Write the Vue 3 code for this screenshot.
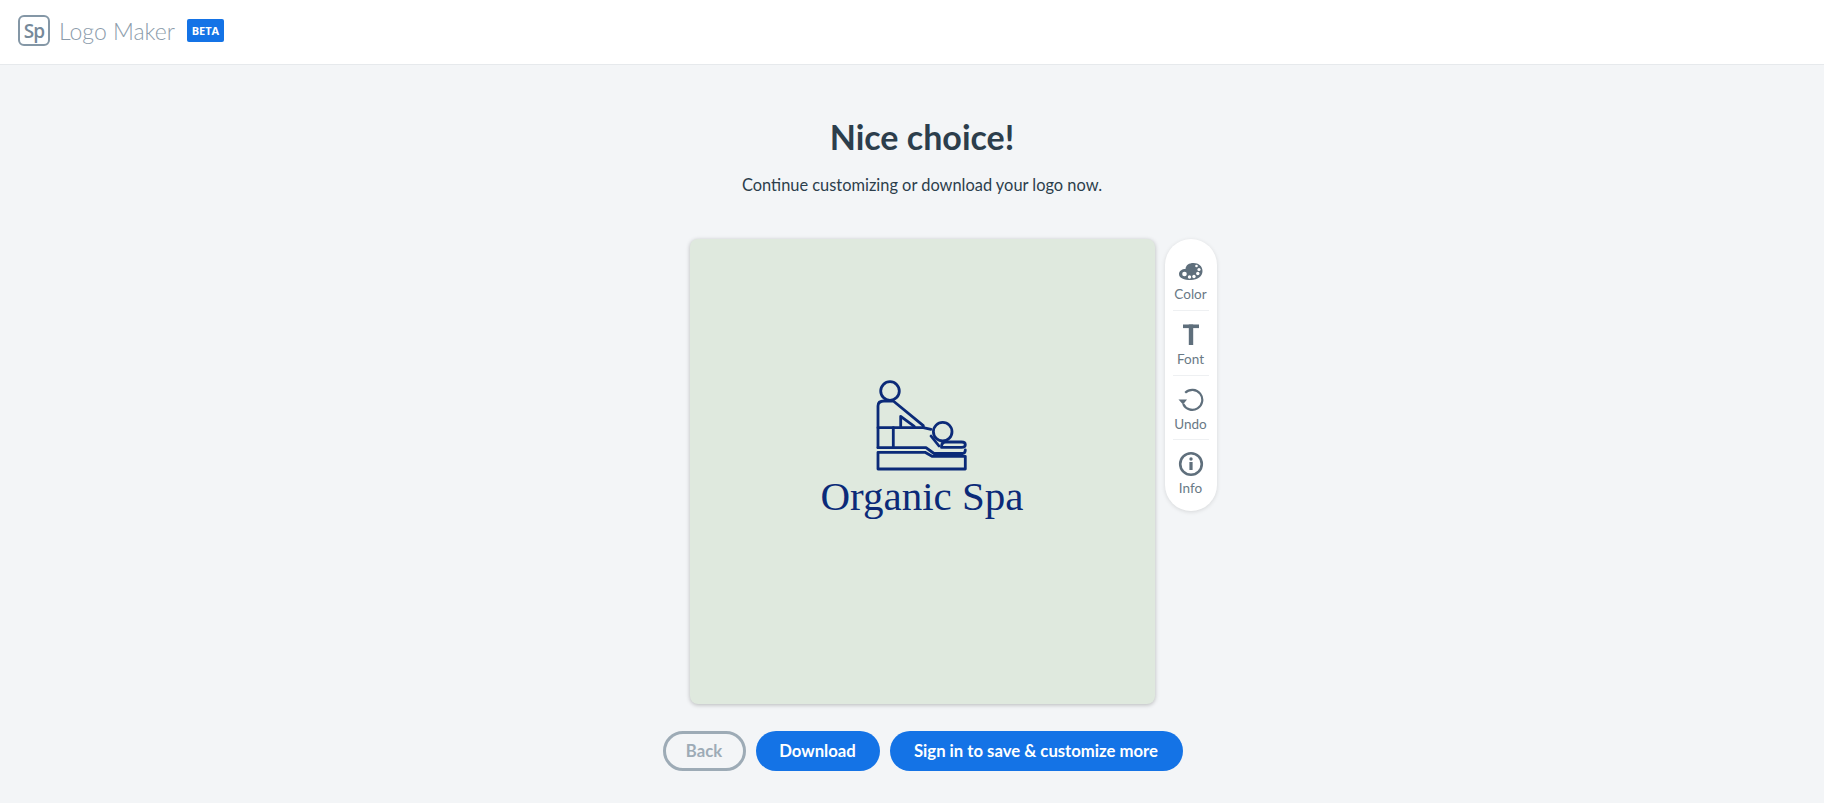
<template>
  <div class="page">
    <header class="topbar">
      <div class="sp-mark">Sp</div>
      <span class="product">Logo Maker</span>
      <span class="beta">BETA</span>
    </header>

    <main class="content">
      <h1 class="title">Nice choice!</h1>
      <p class="subtitle">Continue customizing or download your logo now.</p>

      <div class="canvas">
        <div class="logo">
          <svg class="logo-art" viewBox="34 0 92 91" fill="none" stroke="#0b2a78" stroke-width="2.800" stroke-linejoin="round" stroke-linecap="round">
            <circle cx="48" cy="11" r="9.300" />
            <path d="M36 67.700V26q0-5 6-5h9.300l30 24.700v2" />
            <path d="M36 47.700h45.300l7.700 1.600" />
            <path d="M51.300 47.700v20" />
            <path d="M58.700 46.300v-10l13.600 10" />
            <path d="M36 67.700h48l8 5.800h29q2.300-.7 2.300-3.500" />
            <path d="M89 56l8 10" />
            <path d="M99.500 67q0-5 4-5h16q3.800 0 3.800 2.700t-3.800 2.700h-20" />
            <circle cx="100.700" cy="51.700" r="9.300" />
            <path d="M36 72.300h47l7 4h33.300V89H36z" />
          </svg>
          <div class="logo-name">Organic Spa</div>
        </div>

        <aside class="tools">
          <button v-for="tool in tools" :key="tool.label" class="tool">
            <svg v-if="tool.label === 'Color'" class="tool-icon" viewBox="0 0 26 26">
              <path fill="#5f6f7c" d="M1 17c0-3 3-5 6.500-5 .3-4 3.500-6 8-6 5 0 9 3 9 8 0 5.500-5 9-11.500 9-7 0-12-2-12-6z" />
              <circle cx="6.500" cy="17" r="2.300" fill="#fff" />
              <circle cx="11.500" cy="20" r="1.700" fill="#fff" />
              <circle cx="16" cy="19.500" r="1.700" fill="#fff" />
              <circle cx="19.800" cy="16.500" r="1.700" fill="#fff" />
              <circle cx="21" cy="12.500" r="1.600" fill="#fff" />
              <circle cx="18.500" cy="9" r="1.300" fill="#fff" />
            </svg>
            <svg v-else-if="tool.label === 'Font'" class="tool-icon" viewBox="0 0 26 26">
              <rect x="5" y="2.500" width="16" height="3.600" fill="#5f6f7c" />
              <rect x="10.800" y="2.500" width="4.400" height="20.500" fill="#5f6f7c" />
            </svg>
            <svg v-else-if="tool.label === 'Undo'" class="tool-icon" viewBox="0 0 26 26" fill="none">
              <path d="M7.200 5.800A10 10 0 1 1 5.200 17" stroke="#5f6f7c" stroke-width="2.200" />
              <path d="M0.500 12.500h8.500l-4 5z" fill="#5f6f7c" />
            </svg>
            <svg v-else class="tool-icon" viewBox="0 0 26 26" fill="none">
              <circle cx="13" cy="13" r="10.800" stroke="#5f6f7c" stroke-width="2.600" />
              <circle cx="13" cy="8" r="1.700" fill="#5f6f7c" />
              <rect x="11.400" y="11" width="3.200" height="8" fill="#5f6f7c" />
            </svg>
            <span class="tool-label">{{ tool.label }}</span>
          </button>
        </aside>
      </div>

      <div class="actions">
        <button class="btn btn-back">Back</button>
        <button class="btn btn-primary btn-download">Download</button>
        <button class="btn btn-primary btn-signin">Sign in to save &amp; customize more</button>
      </div>
    </main>
  </div>
</template>

<script setup>
const tools = [
  { label: 'Color' },
  { label: 'Font' },
  { label: 'Undo' },
  { label: 'Info' },
]
</script>

<style>
html,
body {
  margin: 0;
  background: #f3f5f7;
}
</style>

<style scoped>
.page {
  height: 803px;
  overflow: hidden;
  background: #f3f5f7;
  font-family: Lato, "Open Sans", sans-serif;
  color: #2c3e4c;
}

.topbar {
  height: 65px;
  box-sizing: border-box;
  display: flex;
  align-items: center;
  padding: 0 18px 3px;
  background: #fff;
  border-bottom: 1px solid #e6e9ec;
}

.sp-mark {
  width: 32px;
  height: 31px;
  box-sizing: border-box;
  display: flex;
  align-items: center;
  justify-content: center;
  border: 2px solid #8497a6;
  border-radius: 6px;
  color: #75899a;
  font-family: "Open Sans", sans-serif;
  font-size: 19px;
  font-weight: 600;
  letter-spacing: -1px;
}

.product {
  margin-left: 9px;
  color: #8c9cab;
  font-size: 23px;
  font-weight: 300;
}

.beta {
  margin-left: 12px;
  width: 37px;
  height: 23px;
  display: flex;
  align-items: center;
  justify-content: center;
  border-radius: 2px;
  background: #1473e6;
  color: #fff;
  font-family: "Open Sans", sans-serif;
  font-size: 11px;
  font-weight: 700;
}

.content {
  display: flex;
  flex-direction: column;
  align-items: center;
  padding-left: 20px;
}

.title {
  margin: 47px 0 0;
  font-size: 34px;
  line-height: 50px;
  font-weight: 700;
}

.subtitle {
  margin: 11px 0 0;
  font-size: 16.400px;
  line-height: 24px;
}

.canvas {
  position: relative;
  width: 465px;
  height: 465px;
  margin-top: 42px;
  display: flex;
  align-items: center;
  justify-content: center;
  background: #dfe9de;
  border-radius: 8px;
  box-shadow: 0 1px 4px rgba(0, 0, 0, 0.25);
}

.logo {
  display: flex;
  flex-direction: column;
  align-items: center;
  margin-bottom: 44px;
}

.logo-art {
  width: 92px;
  height: 91px;
}

.logo-name {
  margin-top: 2px;
  color: #0b2a78;
  font-family: "Liberation Serif", serif;
  font-size: 41px;
  line-height: 46px;
  white-space: nowrap;
}

.tools {
  position: absolute;
  left: calc(100% + 10px);
  top: 0;
  width: 52px;
  height: 272px;
  box-sizing: border-box;
  padding: 7px 0;
  display: flex;
  flex-direction: column;
  background: #fff;
  border-radius: 26px;
  box-shadow: 0 1px 4px rgba(0, 0, 0, 0.12);
}

.tool {
  flex: 1;
  margin: 0 8px;
  padding: 11px 0 0;
  display: flex;
  flex-direction: column;
  align-items: center;
  background: none;
  border: 0;
  border-bottom: 1px solid #eef0f2;
  font-family: inherit;
}

.tool:last-child {
  border-bottom: 0;
}

.tool-icon {
  width: 26px;
  height: 26px;
}

.tool-label {
  margin-top: 2px;
  color: #697985;
  font-size: 13.500px;
  line-height: 18px;
}

.actions {
  display: flex;
  gap: 10px;
  margin-top: 27px;
  margin-left: 1px;
}

.btn {
  height: 40px;
  box-sizing: border-box;
  border-radius: 20px;
  font-family: inherit;
  font-size: 16.700px;
  font-weight: 700;
  padding: 0;
}

.btn-back {
  width: 83px;
  background: transparent;
  border: 3px solid #9dabb6;
  color: #9dabb6;
}

.btn-primary {
  background: #1473e6;
  border: 0;
  color: #fff;
}

.btn-download {
  width: 124px;
}

.btn-signin {
  width: 293px;
}
</style>
